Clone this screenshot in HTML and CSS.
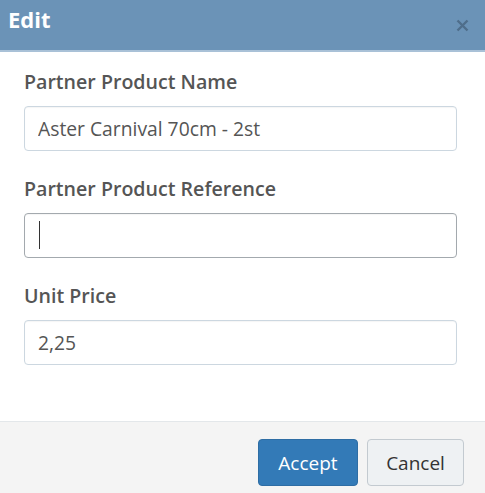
FILE: index.html
```html
<!DOCTYPE html>
<html>
<head>
<meta charset="utf-8">
<link rel="stylesheet" href="styles.css">
</head>
<body>
<div class="modal">
  <div class="modal-header">
    <h4 class="modal-title">Edit</h4>
    <button class="close" type="button" aria-label="Close">
      <svg width="13" height="13" viewBox="0 0 13 13"><path d="M1.5 1.5 L11.5 11.5 M11.5 1.5 L1.5 11.5" stroke="currentColor" stroke-width="2.4" stroke-linecap="butt"/></svg>
    </button>
  </div>
  <div class="modal-body">
    <div class="form-group">
      <label class="control-label">Partner Product Name</label>
      <input class="form-control" type="text" value="Aster Carnival 70cm - 2st">
    </div>
    <div class="form-group">
      <label class="control-label">Partner Product Reference</label>
      <div class="focus-wrap">
        <input class="form-control focused" type="text" value="">
        <span class="caret"></span>
      </div>
    </div>
    <div class="form-group">
      <label class="control-label">Unit Price</label>
      <input class="form-control" type="text" value="2,25">
    </div>
  </div>
  <div class="modal-footer">
    <button class="btn btn-primary" type="button">Accept</button>
    <button class="btn btn-default" type="button">Cancel</button>
  </div>
</div>
</body>
</html>
```
FILE: styles.css
```css
* { box-sizing: border-box; }
html, body { margin: 0; padding: 0; background: #ffffff; }
body {
  font-family: "Open Sans", "DejaVu Sans", sans-serif;
  color: #555555;
  width: 485px;
  height: 493px;
  overflow: hidden;
}
.modal { display: flex; flex-direction: column; height: 493px; }
.modal-header {
  height: 52px;
  background: #6b93b7;
  border-bottom: 2px solid #a9c1d7;
  display: flex;
  align-items: center;
  justify-content: space-between;
  padding: 0 16px 0 8px;
}
.modal-title {
  margin: 0;
  font-size: 22px;
  font-weight: 700;
  color: #ffffff;
  line-height: 30px;
  position: relative;
  top: -6px;
}
.close {
  background: none;
  border: 0;
  padding: 0;
  color: #4f6e8b;
  display: flex;
}
.modal-body {
  padding: 17px 28px 0 24px;
  flex: 0 0 369px;
}
.form-group { display: flex; flex-direction: column; margin-bottom: 25px; }
.control-label {
  font-size: 19.6px;
  font-weight: 600;
  line-height: 26px;
  margin-bottom: 11px;
  color: #555555;
}
.form-control {
  width: 100%;
  height: 45px;
  border: 1px solid #ccd7e0;
  border-radius: 4px;
  padding: 0 13px;
  font-family: "Open Sans", "DejaVu Sans", sans-serif;
  font-size: 19.3px;
  color: #555555;
  background: #fff;
  box-shadow: inset 0 1px 1px rgba(0,0,0,0.04);
  outline: none;
}
.focus-wrap { position: relative; }
.form-control.focused { border-color: #a3a9ae; }
.caret {
  position: absolute;
  left: 15px;
  top: 8px;
  width: 1px;
  height: 28px;
  background: #333;
}
.modal-footer {
  flex: 1;
  background: #f4f4f4;
  border-top: 1px solid #e3e7ea;
  display: flex;
  justify-content: flex-end;
  align-items: flex-start;
  gap: 9px;
  padding: 17px 21px 0 0;
}
.btn {
  height: 47px;
  border-radius: 4px;
  font-family: "Open Sans", "DejaVu Sans", sans-serif;
  font-size: 19px;
  padding: 0;
  cursor: pointer;
}
.btn-primary {
  width: 100px;
  background: #337ab7;
  border: 1px solid #2e6da4;
  color: #ffffff;
}
.btn-default {
  width: 97px;
  background: #eef1f3;
  border: 1px solid #c3cad0;
  color: #333333;
}
```
